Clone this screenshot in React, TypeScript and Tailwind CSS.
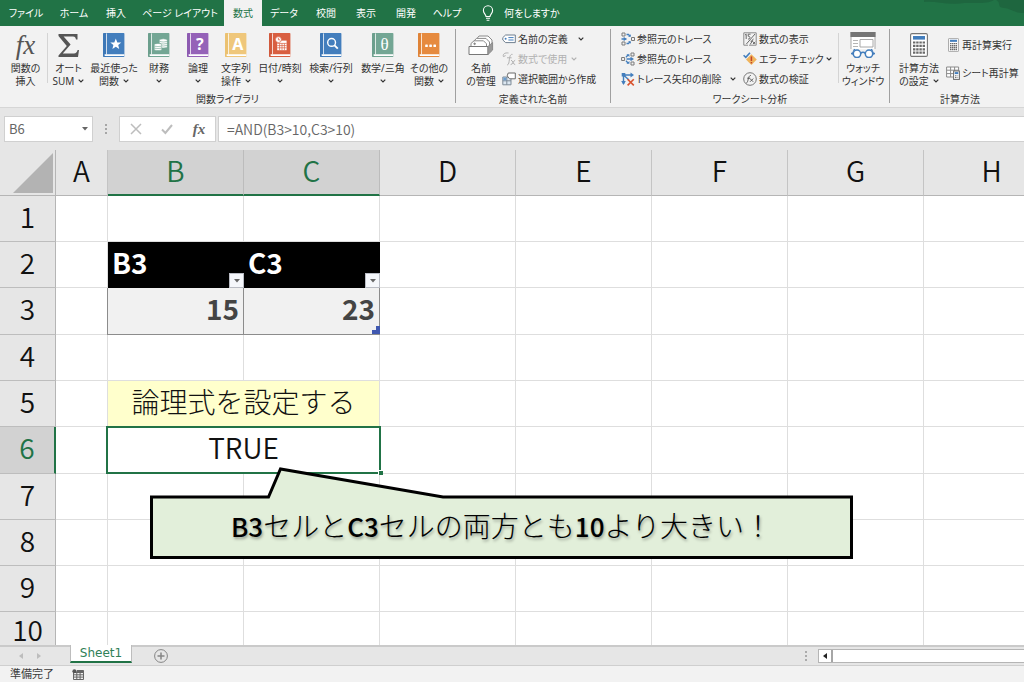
import type { ReactNode } from "react";

const UI_FONT = "font-['Noto_Sans','Noto_Sans_CJK_JP',sans-serif]";
const CELL_FONT = "font-['Noto_Sans_CJK_JP',sans-serif]";

function Chevron({ className = "" }: { className?: string }) {
  return (
    <svg viewBox="0 0 6 4" className={`inline-block h-1 w-1.5 shrink-0 ${className}`} fill="none" stroke="currentColor" strokeWidth="1.2">
      <path d="M0.7 0.7 3 3 5.3 0.7" />
    </svg>
  );
}

function Book({ color, dark, children }: { color: string; dark: string; children: ReactNode }) {
  return (
    <svg viewBox="0 0 22 24" className="h-6 w-[22px]">
      <rect x="0" y="0" width="21.4" height="24" rx="0.8" fill={color} />
      <rect x="0" y="0" width="3" height="24" rx="0.8" fill={dark} opacity="0.2" />
      <rect x="3" y="0.4" width="1" height="21" fill="#fff" opacity="0.75" />
      <path d="M2.2 21.3H21.4V22.9H2.2a0.8 0.8 0 0 1 0-1.6Z" fill="#fff" />
      {children}
    </svg>
  );
}

const bookText = "font-['Noto_Sans',sans-serif] font-bold";

const books: { lines: [string, string]; width: string; icon: ReactNode }[] = [
  {
    lines: ["最近使った", "関数"],
    width: "w-[50px]",
    icon: (
      <Book color="#437ebd" dark="#2a5f9a">
        <path d="M12.8 5.6 14.3 9.4 18.3 9.6 15.2 12.1 16.2 16 12.8 13.8 9.4 16 10.4 12.1 7.3 9.6 11.3 9.4Z" fill="#fff" />
      </Book>
    ),
  },
  {
    lines: ["財務", ""],
    width: "w-10",
    icon: (
      <Book color="#73a694" dark="#4f8672">
        <g fill="#fff" stroke="#73a694" strokeWidth="0.6">
          <ellipse cx="15.3" cy="13.4" rx="4" ry="1.6" />
          <ellipse cx="15.3" cy="11.4" rx="4" ry="1.6" />
          <ellipse cx="15.3" cy="9.4" rx="4" ry="1.6" />
          <ellipse cx="15.3" cy="7.4" rx="4" ry="1.6" />
          <ellipse cx="10" cy="16" rx="4" ry="1.6" />
          <ellipse cx="10" cy="14" rx="4" ry="1.6" />
          <ellipse cx="10" cy="12" rx="4" ry="1.6" />
        </g>
      </Book>
    ),
  },
  {
    lines: ["論理", ""],
    width: "w-[38px]",
    icon: (
      <Book color="#9562b8" dark="#6f3f96">
        <text x="12.8" y="17" textAnchor="middle" fontSize="16" fill="#fff" className={bookText}>?</text>
      </Book>
    ),
  },
  {
    lines: ["文字列", "操作"],
    width: "w-[38px]",
    icon: (
      <Book color="#efc77b" dark="#dba848">
        <text x="12.8" y="17" textAnchor="middle" fontSize="16" fill="#fff" className={bookText}>A</text>
      </Book>
    ),
  },
  {
    lines: ["日付/時刻", ""],
    width: "w-[50px]",
    icon: (
      <Book color="#d95f41" dark="#b5402a">
        <rect x="8.2" y="7.6" width="9.4" height="9.6" fill="#fff" />
        <path d="M8.2 10.4H17.6M8.2 12.6H17.6M8.2 14.8H17.6M10.6 10.4V17.2M13 10.4V17.2M15.4 10.4V17.2" stroke="#d95f41" strokeWidth="0.7" />
        <circle cx="9.4" cy="6.6" r="3" fill="#fff" stroke="#d95f41" strokeWidth="0.7" />
        <path d="M9.4 4.8V6.8H11" stroke="#d95f41" strokeWidth="0.8" fill="none" />
      </Book>
    ),
  },
  {
    lines: ["検索/行列", ""],
    width: "w-[52px]",
    icon: (
      <Book color="#437ebd" dark="#2a5f9a">
        <circle cx="11.6" cy="9.4" r="3.9" fill="none" stroke="#fff" strokeWidth="1.4" />
        <path d="M14.3 12.1 17.8 15.6" stroke="#fff" strokeWidth="1.9" />
      </Book>
    ),
  },
  {
    lines: ["数学/三角", ""],
    width: "w-[52px]",
    icon: (
      <Book color="#73a694" dark="#4f8672">
        <text x="12.6" y="16.6" textAnchor="middle" fontSize="17" fill="#fff" className="font-['Liberation_Serif',serif]">θ</text>
      </Book>
    ),
  },
  {
    lines: ["その他の", "関数"],
    width: "w-10",
    icon: (
      <Book color="#e68a3e" dark="#c56a20">
        <g fill="#fff">
          <rect x="7.2" y="11.4" width="2.6" height="2.6" rx="0.6" />
          <rect x="11.3" y="11.4" width="2.6" height="2.6" rx="0.6" />
          <rect x="15.4" y="11.4" width="2.6" height="2.6" rx="0.6" />
        </g>
      </Book>
    ),
  },
];

function BigButton({ icon, lines, width, menu }: { icon: ReactNode; lines: [string, string]; width: string; menu?: boolean }) {
  return (
    <button type="button" className={`flex shrink-0 flex-col items-center whitespace-nowrap ${width}`}>
      <span className="flex h-6 items-center justify-center">{icon}</span>
      <span className="mt-1 h-3.5 leading-3.5">{lines[0]}</span>
      <span className="flex h-3 items-center gap-1 leading-3">
        {lines[1]}
        {menu && <Chevron />}
      </span>
    </button>
  );
}

function SmallButton({ icon, label, menu, disabled, gap = "ml-2" }: { icon: ReactNode; label: string; menu?: boolean; disabled?: boolean; gap?: string }) {
  return (
    <button type="button" disabled={disabled} className="flex h-5 items-center whitespace-nowrap disabled:text-[#b1b1b1]">
      <span className="mr-0.5 flex w-3.5 shrink-0 items-center justify-center">{icon}</span>
      {label}
      {menu && <Chevron className={gap} />}
    </button>
  );
}

function Group({ title, width, children }: { title: string; width: string; children: ReactNode }) {
  return (
    <section className={`flex shrink-0 flex-col ${width}`}>
      <div className="flex h-[62px] items-start">{children}</div>
      <h2 className="h-4 text-center leading-4">{title}</h2>
    </section>
  );
}

const GroupRule = () => <div className="h-[74px] w-px shrink-0 bg-[#a0a0a0]" />;
const InnerRule = () => <div className="mt-1 h-[50px] w-px shrink-0 bg-[#d4d4d4]" />;

const icon14 = "h-3.5 w-3.5";

const TagIcon = (
  <svg viewBox="0 0 14 14" className={icon14} fill="none">
    <path d="M3.6 3H13.3V10.6H3.6L0.8 8V5.6Z" fill="#fff" stroke="#6f7f8f" strokeLinejoin="round" />
    <circle cx="3.6" cy="6.8" r="1" fill="#437ebd" />
    <path d="M6.4 5.6H11.6M6.4 8H11.6" stroke="#437ebd" />
  </svg>
);
const UseIcon = (
  <svg viewBox="0 0 14 14" className={icon14} fill="none" stroke="#b1b1b1">
    <path d="M6.5 1C3 0.5 0.5 2 1.4 4.6L3.6 3.6M5.2 13C7 12.6 7 10 7.4 7.2 7.7 4.4 8.5 2 10.5 2.4M5 5.8H9.6M9 8.2C10.8 8.2 11 12.6 13.2 12.6M13.2 8.2C11.6 8.2 11 12.6 8.6 12.6" />
  </svg>
);
const SelectionIcon = (
  <svg viewBox="0 0 14 14" className={icon14} fill="none">
    <path d="M0.8 5H9V12.8H0.8ZM0.8 8.8H9M4.8 5V12.8" fill="#dce7f1" stroke="#7e8b97" />
    <path d="M6.2 1H13.3V6.8H7.6L5.2 3.9Z" fill="#fff" stroke="#6b6b6b" />
    <path d="M1.3 5.5H4.3V8.3H1.3Z" fill="#6c9ecf" />
  </svg>
);
const PrecedentIcon = (
  <svg viewBox="0 0 14 14" className={icon14} fill="none">
    <path d="M1 1H4V4H1ZM1 10H4V13H1ZM10.5 5.5H13.5V8.5H10.5Z" stroke="#7a7a7a" />
    <path d="M5.5 2.5H7.5L9 4.2M0.5 7H5.5M5.5 11.5H7.5L9 9.8" stroke="#437ebd" strokeWidth="1.3" />
    <path d="M2.7 4.7 5.4 7 2.7 9.3ZM7 4.8H9.8V2.2ZM7 9.2H9.8V11.8Z" fill="#437ebd" />
  </svg>
);
const DependentIcon = (
  <svg viewBox="0 0 14 14" className={icon14} fill="none">
    <path d="M0.6 5.5H3.6V8.5H0.6ZM10 1H13V4H10ZM10 10H13V13H10Z" stroke="#7a7a7a" />
    <path d="M5 5.2 7 3M5 8.8 7 11M5.5 7H10" stroke="#437ebd" strokeWidth="1.3" />
    <path d="M5.4 2.2H8.4V5ZM5.4 11.8H8.4V9ZM9.5 4.8 13 7 9.5 9.2Z" fill="#437ebd" />
  </svg>
);
const RemoveArrowsIcon = (
  <svg viewBox="0 0 14 14" className={icon14} fill="none">
    <path d="M2.5 3H11M2.5 3V12M2.5 3 8 8" stroke="#437ebd" strokeWidth="1.4" />
    <path d="M0.7 1H4.3V4.6H0.7ZM9.5 0.6 13 3 9.5 5.4ZM0.2 9 2.5 13 4.8 9Z" fill="#437ebd" />
    <path d="M6.6 7.2 12.8 13.4M12.8 7.2 6.6 13.4" stroke="#d9532f" strokeWidth="1.6" />
  </svg>
);
const ShowFormulaIcon = (
  <svg viewBox="0 0 14 14" className={icon14} fill="none">
    <path d="M0.8 8V0.8H13.2V13.2H6M0.8 8V13.2H5" stroke="#8a8a8a" />
    <path d="M2 3 3.2 2.2V7M5 7C7.4 7.6 7.8 4 5.2 4.2V2.2H7.6M12 2 3.4 12" stroke="#5c5c5c" strokeWidth="0.9" />
    <path d="M7 12.2C9 12 8.6 6.8 10.6 7M7.6 9.2H10.2M10 9.8 12.2 12M12.2 9.8 10 12" stroke="#5c5c5c" strokeWidth="0.9" />
  </svg>
);
const ErrorIcon = (
  <svg viewBox="0 0 14 14" className={icon14} fill="none">
    <path d="M8.4 2.2 13.8 7.6 8.4 13 3 7.6Z" fill="#f0b45c" />
    <path d="M8.4 4.4V9" stroke="#c2402a" strokeWidth="1.5" />
    <path d="M8.4 10V11.4" stroke="#c2402a" strokeWidth="1.5" />
    <path d="M0.6 3.2 2.8 5.4 7 0.8" stroke="#437ebd" strokeWidth="1.6" />
  </svg>
);
const EvaluateIcon = (
  <svg viewBox="0 0 14 14" className={icon14} fill="none" stroke="#5c5c5c">
    <circle cx="7" cy="7" r="6.3" stroke="#777" />
    <path d="M3.4 11C5.4 10.6 4.8 3.6 7.8 3.4M4.2 6.2H7.2M7 6.6 10.2 9.8M10.2 6.6 7 9.8" />
  </svg>
);

function CalcIcon({ className }: { className: string }) {
  return (
    <svg viewBox="0 0 18 24" className={className} fill="none">
      <rect x="0.6" y="0.6" width="16.8" height="22.8" rx="1.4" fill="#fff" stroke="#757575" strokeWidth="1.1" />
      <rect x="3" y="3" width="12" height="3.6" fill="#437ebd" />
      <path d="M3 8.4h2.4v2.2H3zM6.2 8.4h2.4v2.2H6.2zM9.4 8.4h2.4v2.2H9.4zM12.6 8.4H15v2.2h-2.4zM3 11.8h2.4V14H3zM6.2 11.8h2.4V14H6.2zM9.4 11.8h2.4V14H9.4zM12.6 11.8H15V14h-2.4zM3 15.2h2.4v2.2H3zM6.2 15.2h2.4v2.2H6.2zM9.4 15.2h2.4v2.2H9.4zM12.6 15.2H15v2.2h-2.4zM3 18.6h2.4v2.2H3zM6.2 18.6h2.4v2.2H6.2zM9.4 18.6h2.4v2.2H9.4zM12.6 18.6H15v2.2h-2.4z" fill="#6a6a6a" />
    </svg>
  );
}

const SheetCalcIcon = (
  <svg viewBox="0 0 14 14" className={icon14} fill="none">
    <path d="M0.6 1H12.6V11H0.6ZM0.6 4.2H12.6M0.6 7.6H12.6M4.6 1V11M8.6 1V11" fill="#fff" stroke="#8a8a8a" />
    <rect x="7.6" y="5" width="5.8" height="8.4" fill="#fff" stroke="#6a6a6a" />
    <rect x="8.7" y="6.1" width="3.6" height="2" fill="#437ebd" />
    <path d="M9 9.8H12.2M9 11.6H12.2" stroke="#6a6a6a" strokeDasharray="1 0.5" />
  </svg>
);

const WatchIcon = (
  <svg viewBox="0 0 28 26" className="h-[26px] w-7" fill="none">
    <rect x="2" y="0.5" width="24" height="19" fill="#fff" stroke="#a8a8a8" />
    <rect x="1.5" y="0" width="25" height="5" fill="#757575" />
    <path d="M4 8.5H9M4 11.5H9M4 14.5H9" stroke="#b5b5b5" />
    <path d="M11 7.5H24V15H11Z" stroke="#a8a8a8" />
    <path d="M0 17H28V26H0Z" fill="#f2f2f2" />
    <path d="M3.2 22.5 5.6 17M24.8 22.5 22.4 17" stroke="#437ebd" strokeWidth="1.4" />
    <circle cx="8" cy="21.8" r="3.7" fill="#fff" stroke="#437ebd" strokeWidth="1.5" />
    <circle cx="20" cy="21.8" r="3.7" fill="#fff" stroke="#437ebd" strokeWidth="1.5" />
    <path d="M11.6 21.4C13 20 15 20 16.4 21.4M2 21.5H4.3M23.7 21.5H26" stroke="#437ebd" strokeWidth="1.5" />
  </svg>
);

const NameManagerIcon = (
  <svg viewBox="0 0 26 22" className="h-[22px] w-[26px]" fill="#fff" stroke="#8a8a8a">
    <path d="M9 11V4.5L11 2H20L24 6V13L21 17" />
    <path d="M6 12V7L8.4 4.4H18L21.5 8V14" />
    <path d="M3 13V9.5L6 6.8H15.5L18.5 9.8V13" />
    <circle cx="6.6" cy="9.8" r="0.8" fill="#777" />
    <path d="M1 12.5H20V20.5H1Z" stroke="#777" />
    <path d="M20 12.5 24.6 8.5V16L20 20.5Z" fill="#9a9a9a" stroke="#8a8a8a" />
  </svg>
);

const tabs: [string, string][] = [
  ["ファイル", "w-[52px]"],
  ["ホーム", "w-11"],
  ["挿入", "w-10"],
  ["ページ レイアウト", "w-[88px]"],
  ["数式", "w-[38px]"],
  ["データ", "w-11"],
  ["校閲", "w-10"],
  ["表示", "w-10"],
  ["開発", "w-10"],
  ["ヘルプ", "w-[42px]"],
];

function TabBar() {
  return (
    <nav className="relative flex h-[26px] shrink-0 overflow-hidden bg-[#217346] text-white">
      <svg viewBox="0 0 100 14" className="absolute top-0 right-0 h-3.5 w-[100px]" fill="#1e663f">
        <path d="M0 0H70C62 5 48 2 36 3.4 22 5 12 1 0 2Z" />
        <path d="M72 0H100V13C90 13 88 9 80 8 72 7 78 3 72 0Z" />
      </svg>
      {tabs.map(([label, width]) => (
        <button
          key={label}
          type="button"
          className={`flex shrink-0 items-center justify-center whitespace-nowrap ${width} ${label === "数式" ? "bg-[#f2f2f2] text-[#217346]" : ""}`}
        >
          {label}
        </button>
      ))}
      <button type="button" className="ml-3.5 flex items-center gap-2.5 whitespace-nowrap">
        <svg viewBox="0 0 12 16" className="h-4 w-3" fill="none" stroke="currentColor" strokeWidth="1.1">
          <path d="M4 11.5C4 9.5 1.4 8.4 1.4 5.4a4.6 4.6 0 0 1 9.2 0C10.6 8.4 8 9.5 8 11.5ZM4 13.3H8M4.6 15.2H7.4" />
        </svg>
        何をしますか
      </button>
    </nav>
  );
}

function Ribbon() {
  return (
    <div className="flex h-[82px] shrink-0 overflow-hidden border-b border-[#d6d6d6] bg-[#f2f2f2] pt-[3px] text-[#333]">
      <Group title="関数ライブラリ" width="w-[455px]">
        <BigButton
          width="mt-1 ml-1 w-[43px]"
          lines={["関数の", "挿入"]}
          icon={<span className="font-['Liberation_Serif',serif] text-[27px] leading-6 text-[#555] italic">fx</span>}
        />
        <InnerRule />
        <BigButton
          width="mt-1 w-[41px]"
          lines={["オート", "SUM"]}
          menu
          icon={
            <svg viewBox="0 0 21 23" className="h-[23px] w-[21px]" fill="#555">
              <path d="M0.5 0H19.5V5.5H18C17.6 3.4 17 2.4 15 2.4H5.6L12.6 10.6 4.8 19.4H16C18 19.4 19 18.2 19.6 16H21L20 23H0.5V21.4L8.8 12 0.5 2Z" />
            </svg>
          }
        />
        <div className="mt-1 flex">
          {books.map((b) => (
            <BigButton key={b.lines[0]} {...b} menu />
          ))}
        </div>
      </Group>
      <GroupRule />
      <Group title="定義された名前" width="w-[154px]">
        <BigButton width="mt-1 ml-1 w-[42px]" lines={["名前", "の管理"]} icon={NameManagerIcon} />
        <div className="flex flex-col">
          <SmallButton icon={TagIcon} label="名前の定義" menu gap="ml-2.5" />
          <SmallButton icon={UseIcon} label="数式で使用" menu disabled gap="ml-1" />
          <SmallButton icon={SelectionIcon} label="選択範囲から作成" />
        </div>
      </Group>
      <GroupRule />
      <Group title="ワークシート分析" width="w-[278px]">
        <div className="ml-2.5 flex w-[122px] flex-col">
          <SmallButton icon={PrecedentIcon} label="参照元のトレース" />
          <SmallButton icon={DependentIcon} label="参照先のトレース" />
          <SmallButton icon={RemoveArrowsIcon} label="トレース矢印の削除" menu />
        </div>
        <div className="flex w-[95px] flex-col">
          <SmallButton icon={ShowFormulaIcon} label="数式の表示" />
          <SmallButton icon={ErrorIcon} label="エラー チェック" menu gap="ml-0.5" />
          <SmallButton icon={EvaluateIcon} label="数式の検証" />
        </div>
        <InnerRule />
        <BigButton width="mt-1 w-12" lines={["ウォッチ", "ウィンドウ"]} icon={WatchIcon} />
      </Group>
      <GroupRule />
      <Group title="計算方法" width="w-[140px]">
        <BigButton width="mt-1 ml-1 w-[50px]" lines={["計算方法", "の設定"]} menu icon={<CalcIcon className="h-6 w-[18px]" />} />
        <div className="ml-0.5 flex flex-col gap-2 pt-1.5">
          <SmallButton icon={<CalcIcon className="h-3.5 w-[11px]" />} label="再計算実行" />
          <SmallButton icon={SheetCalcIcon} label="シート再計算" />
        </div>
      </Group>
    </div>
  );
}

function FormulaBar() {
  return (
    <div className={`flex h-[42px] shrink-0 items-center bg-[#e6e6e6] pl-1 text-[#666] ${CELL_FONT}`}>
      <div className="flex h-[26px] w-[89px] shrink-0 items-center border border-[#d0d0d0] bg-white">
        <input aria-label="名前ボックス" defaultValue="B6" className="w-0 flex-1 bg-transparent pl-1 text-[13px] outline-none" />
        <button type="button" aria-label="名前の一覧" className="px-1">
          <svg viewBox="0 0 6 4" className="h-1 w-1.5" fill="#666"><path d="M0 0H6L3 3.6Z" /></svg>
        </button>
      </div>
      <svg viewBox="0 0 2 10" className="mx-3 h-2.5 w-0.5 shrink-0" fill="#a6a6a6"><path d="M0 0h2v2H0zM0 4h2v2H0zM0 8h2v2H0z" /></svg>
      <div className="flex h-[26px] w-[97px] shrink-0 items-center justify-around border border-[#d0d0d0] bg-white">
        <button type="button" aria-label="キャンセル">
          <svg viewBox="0 0 12 12" className="h-3 w-3" fill="none" stroke="#bdbdbd" strokeWidth="1.5"><path d="M1 1 11 11M11 1 1 11" /></svg>
        </button>
        <button type="button" aria-label="入力">
          <svg viewBox="0 0 12 12" className="h-3 w-3" fill="none" stroke="#bdbdbd" strokeWidth="2"><path d="M1 6.5 4.4 10 11 2" /></svg>
        </button>
        <button type="button" aria-label="関数の挿入" className="font-['Liberation_Serif',serif] text-[15px] leading-4 font-bold italic">fx</button>
      </div>
      <input
        aria-label="数式バー"
        defaultValue="=AND(B3>10,C3>10)"
        className="ml-0.5 h-[26px] min-w-0 flex-1 border border-r-0 border-[#d0d0d0] bg-white pl-2 text-[14px] font-[350] text-[#666] outline-none"
      />
    </div>
  );
}

const columns = ["A", "B", "C", "D", "E", "F", "G", "H"];

function FilterButton({ name }: { name: string }) {
  return (
    <button type="button" aria-label={`${name} フィルター`} className="absolute right-0 bottom-0 flex h-[15px] w-[15px] items-center justify-center border border-[#b9bcc4] bg-[#f5f7fb]">
      <svg viewBox="0 0 6 4" className="h-1 w-1.5" fill="#666"><path d="M0 0H6L3 3.4Z" /></svg>
    </button>
  );
}

const plain = "border-r border-b border-[#dedede] p-0";
const cellText = "block pb-1 leading-10";

function rowCells(row: number): ReactNode {
  if (row === 2)
    return ["B3", "C3"].map((n) => (
      <td key={n} className="relative bg-black py-0 pr-0 pl-1 text-left align-top font-bold text-white">
        <span className={cellText}>{n}</span>
        <FilterButton name={n} />
      </td>
    ));
  if (row === 3)
    return ["15", "23"].map((n, i) => (
      <td key={n} className={`relative border-r border-b border-[#8c8c8c] bg-[#f1f1f1] py-0 pr-1 pl-0 text-right align-top font-bold text-[#444] ${i === 0 ? "shadow-[-1px_0_0_#8c8c8c]" : ""}`}>
        <span className={cellText}>{n}</span>
        {i === 1 && (
          <svg viewBox="0 0 8 8" className="absolute -right-px bottom-0 h-2 w-2" fill="#4058b0"><path d="M4 0H8V8H0V4H4Z" /></svg>
        )}
      </td>
    ));
  if (row === 5)
    return (
      <td colSpan={2} className={`${plain} bg-[#ffffcc] text-center align-top font-light`}>
        <span className={cellText}>論理式を設定する</span>
      </td>
    );
  if (row === 6)
    return (
      <td colSpan={2} className={`${plain} relative text-center align-top`}>
        <span className={cellText}>TRUE</span>
        <span className="absolute -inset-x-0.5 -top-px -bottom-px border-2 border-[#217346]" />
        <span className="absolute -right-1 -bottom-0.5 h-[5px] w-[5px] border-t border-l border-white bg-[#217346]" />
      </td>
    );
  return (
    <>
      <td className={plain} />
      <td className={plain} />
    </>
  );
}

function Sheet() {
  return (
    <main className={`relative min-h-0 flex-1 overflow-hidden bg-white ${CELL_FONT} text-[28px] font-[350] text-[#111] [font-feature-settings:normal]`}>
      <table className="w-full min-w-[1060px] table-fixed border-separate border-spacing-0">
        <colgroup>
          <col className="w-14" />
          <col className="w-[52px]" />
          {columns.slice(1, -1).map((c) => (
            <col key={c} className="w-[136px]" />
          ))}
          <col />
        </colgroup>
        <thead>
          <tr className="h-[46px] bg-[#e6e6e6]">
            <th className="border-r border-b border-[#b5b5b5] p-0">
              <svg viewBox="0 0 40 40" className="mr-0.5 ml-auto h-10 w-10" fill="#b3b3b3"><path d="M40 0V40H0Z" /></svg>
            </th>
            {columns.map((c) => {
              const on = c === "B" || c === "C";
              return (
                <th
                  key={c}
                  scope="col"
                  className={`border-r p-0 align-top leading-10 font-[350] ${on ? "border-b-2 border-r-[#bcbcbc] border-b-[#217346] bg-[#d2d2d2] text-[#217346]" : "border-b border-r-[#c4c4c4] border-b-[#b5b5b5]"}`}
                >
                  {c}
                </th>
              );
            })}
          </tr>
        </thead>
        <tbody>
          {[1, 2, 3, 4, 5, 6, 7, 8, 9, 10].map((r) => (
            <tr key={r} className={r === 10 ? "h-[34px]" : r === 3 || r === 6 ? "h-[47px]" : "h-[46px]"}>
              <th
                scope="row"
                className={`border-b border-b-[#bdbdbd] p-0 align-top font-[350] ${r === 10 ? "leading-[34px]" : "leading-10"} ${r === 6 ? "border-r-2 border-r-[#217346] bg-[#d2d2d2] text-[#217346]" : "border-r border-r-[#b5b5b5] bg-[#e6e6e6]"}`}
              >
                {r}
              </th>
              <td className={plain} />
              {rowCells(r)}
              {columns.slice(3).map((c) => (
                <td key={c} className={plain} />
              ))}
            </tr>
          ))}
        </tbody>
      </table>
      <div className="absolute top-[317px] left-[150px] h-[93px] w-[703px]">
        <svg viewBox="0 0 703 93" className="absolute inset-0 h-full w-full">
          <path d="M1.5 30H118.5L130.5 2 293 30H701.5V90.5H1.5Z" fill="#e2efda" stroke="#000" strokeWidth="3" />
        </svg>
        <p className="relative mt-[30px] text-center leading-[56px] font-light whitespace-nowrap text-black [text-shadow:1px_2px_3px_rgba(0,0,0,0.35)]">
          <b className="text-[26px] font-medium">B3</b>セルと<b className="text-[26px] font-medium">C3</b>セルの両方とも<b className="text-[26px] font-medium">10</b>より大きい！
        </p>
      </div>
    </main>
  );
}

function SheetTabs() {
  return (
    <div className="flex h-[21px] shrink-0 items-center border-t-2 border-b border-t-[#cacaca] border-b-[#cfcfcf] bg-[#e6e6e6]">
      <div className="flex w-[70px] shrink-0 items-center gap-3.5 pl-[19px]">
        <button type="button" aria-label="前のシート"><svg viewBox="0 0 4 6" className="h-1.5 w-1" fill="#bdbdbd"><path d="M4 0V6L0 3Z" /></svg></button>
        <button type="button" aria-label="次のシート"><svg viewBox="0 0 4 6" className="h-1.5 w-1" fill="#bdbdbd"><path d="M0 0V6L4 3Z" /></svg></button>
      </div>
      <button type="button" className="-mt-1 h-[18px] w-[62px] shrink-0 border-x border-b-2 border-x-[#bdbdbd] border-b-[#217346] bg-white font-['DejaVu_Sans',sans-serif] text-[12px] leading-3.5 text-[#2f8057]">
        Sheet1
      </button>
      <button type="button" aria-label="新しいシート" className="ml-[22px]">
        <svg viewBox="0 0 14 14" className="h-3.5 w-3.5" fill="none" stroke="#858585"><circle cx="7" cy="7" r="6.4" /><path d="M7 3.5V10.5M3.5 7H10.5" strokeWidth="1.5" /></svg>
      </button>
      <svg viewBox="0 0 2 10" className="mr-[11px] ml-auto h-2.5 w-0.5 shrink-0" fill="#ababab"><path d="M0 0h2v2H0zM0 4h2v2H0zM0 8h2v2H0z" /></svg>
      <div className="flex h-3.5 w-[206px] shrink-0 border border-r-0 border-[#b5b5b5] bg-white">
        <button type="button" aria-label="左へスクロール" className="flex w-3.5 items-center justify-center border-r-2 border-[#a6a6a6]">
          <svg viewBox="0 0 4 6" className="h-1.5 w-1" fill="#222"><path d="M4 0V6L0 3Z" /></svg>
        </button>
      </div>
    </div>
  );
}

export default function App() {
  return (
    <div className={`flex h-screen flex-col overflow-hidden text-[10px] [font-feature-settings:'palt'] ${UI_FONT}`}>
      <TabBar />
      <Ribbon />
      <FormulaBar />
      <Sheet />
      <SheetTabs />
      <footer className="flex h-4 shrink-0 items-center gap-[18px] bg-[#f2f2f2] pl-2.5 text-[11px] text-[#3b3b3b]">
        準備完了
        <svg viewBox="0 0 12 11" className="h-[11px] w-3" fill="none" stroke="#666">
          <path d="M1.5 3.5H11.5V10.5H1.5ZM1.5 5.8H11.5M1.5 8.1H11.5M4.8 3.5V10.5M8.1 3.5V10.5" />
          <path d="M5 1.5H11.5V3.5H5Z" fill="#666" />
          <circle cx="2.4" cy="2.2" r="2" fill="#555" stroke="none" />
        </svg>
      </footer>
    </div>
  );
}
